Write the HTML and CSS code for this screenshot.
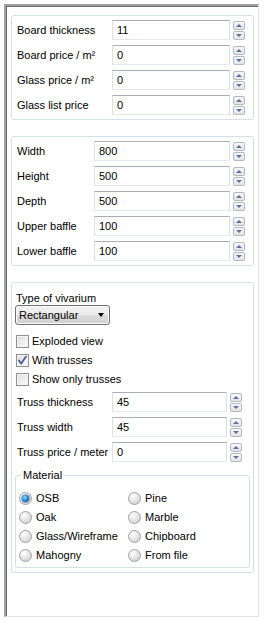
FILE: index.html
```html
<!DOCTYPE html>
<html>
<head>
<meta charset="utf-8">
<link rel="stylesheet" href="styles.css">
</head>
<body>
<div class="frame">
  <section class="group g1">
    <div class="row"><span class="lbl">Board thickness</span><div class="field">11</div><div class="btns"><span class="up"></span><span class="dn"></span></div></div>
    <div class="row"><span class="lbl">Board price / m²</span><div class="field">0</div><div class="btns"><span class="up"></span><span class="dn"></span></div></div>
    <div class="row"><span class="lbl">Glass price / m²</span><div class="field">0</div><div class="btns"><span class="up"></span><span class="dn"></span></div></div>
    <div class="row"><span class="lbl">Glass list price</span><div class="field">0</div><div class="btns"><span class="up"></span><span class="dn"></span></div></div>
  </section>

  <section class="group g2">
    <div class="row"><span class="lbl">Width</span><div class="field">800</div><div class="btns"><span class="up"></span><span class="dn"></span></div></div>
    <div class="row"><span class="lbl">Height</span><div class="field">500</div><div class="btns"><span class="up"></span><span class="dn"></span></div></div>
    <div class="row"><span class="lbl">Depth</span><div class="field">500</div><div class="btns"><span class="up"></span><span class="dn"></span></div></div>
    <div class="row"><span class="lbl">Upper baffle</span><div class="field">100</div><div class="btns"><span class="up"></span><span class="dn"></span></div></div>
    <div class="row"><span class="lbl">Lower baffle</span><div class="field">100</div><div class="btns"><span class="up"></span><span class="dn"></span></div></div>
  </section>

  <section class="group g3">
    <div class="caption">Type of vivarium</div>
    <div class="combo"><span>Rectangular</span><span class="arrow"></span></div>
    <div class="checks">
      <div class="check"><span class="box"></span><span>Exploded view</span></div>
      <div class="check"><span class="box"><svg width="11" height="11" viewBox="0 0 11 11"><path d="M2 5.5 L4.3 8.6 L9 1.6" fill="none" stroke="#4a5f97" stroke-width="1.8" stroke-linejoin="round" stroke-linecap="round"/></svg></span><span>With trusses</span></div>
      <div class="check"><span class="box"></span><span>Show only trusses</span></div>
    </div>
    <div class="truss">
      <div class="row"><span class="lbl">Truss thickness</span><div class="field">45</div><div class="btns"><span class="up"></span><span class="dn"></span></div></div>
      <div class="row"><span class="lbl">Truss width</span><div class="field">45</div><div class="btns"><span class="up"></span><span class="dn"></span></div></div>
      <div class="row"><span class="lbl">Truss price / meter</span><div class="field">0</div><div class="btns"><span class="up"></span><span class="dn"></span></div></div>
    </div>
    <fieldset class="material">
      <legend>Material</legend>
      <div class="radios">
        <div class="radio on"><span class="dot"></span><span>OSB</span></div>
        <div class="radio"><span class="dot"></span><span>Pine</span></div>
        <div class="radio"><span class="dot"></span><span>Oak</span></div>
        <div class="radio"><span class="dot"></span><span>Marble</span></div>
        <div class="radio"><span class="dot"></span><span>Glass/Wireframe</span></div>
        <div class="radio"><span class="dot"></span><span>Chipboard</span></div>
        <div class="radio"><span class="dot"></span><span>Mahogny</span></div>
        <div class="radio"><span class="dot"></span><span>From file</span></div>
      </div>
    </fieldset>
  </section>
</div>
</body>
</html>
```

FILE: styles.css
```css
* { box-sizing: border-box; }

body {
  margin: 0;
  background: #ffffff;
  font-family: "Liberation Sans", Arial, sans-serif;
  font-size: 11px;
  line-height: 13px;
  color: #000;
}

.frame {
  margin: 4px 0 0 4px;
  width: 255px;
  height: 613px;
  border-left: 2px solid #a0a0a0;
  border-top: 2px solid #a0a0a0;
  border-right: 1px solid #e3e3e3;
  border-bottom: 1px solid #e3e3e3;
  box-shadow: inset 1px 1px 0 #696969;
  padding: 9px 4px 0 5px;
  background: #fff;
}

.group {
  border: 1px solid #d5dfe5;
  border-radius: 3px;
  margin-bottom: 16px;
}

.g1, .g2 {
  padding: 4px 8px 4px 5px;
  display: flex;
  flex-direction: column;
  gap: 5px;
}

.row {
  display: flex;
  align-items: center;
  height: 20px;
}

.lbl {
  width: 95px;
  flex: none;
  white-space: nowrap;
}

.g2 .lbl { width: 77px; }

.field {
  flex: 1;
  height: 20px;
  border: 1px solid #abadb3;
  border-left-color: #dbdfe6;
  border-right-color: #dbdfe6;
  border-bottom-color: #e3e9ef;
  padding: 3px 0 0 4px;
  background: #fff;
}

.btns {
  flex: none;
  width: 12px;
  margin-left: 3px;
  display: flex;
  flex-direction: column;
  gap: 1px;
  padding-top: 1px;
}

.up, .dn {
  display: flex;
  align-items: center;
  justify-content: center;
  height: 9px;
  border: 1px solid #b4b8c0;
  border-radius: 2px;
  background: linear-gradient(#f7f7f7, #e2e4e8);
}

.up::after {
  content: "";
  border-left: 3px solid transparent;
  border-right: 3px solid transparent;
  border-bottom: 3px solid #5b71a3;
}

.dn::after {
  content: "";
  border-left: 3px solid transparent;
  border-right: 3px solid transparent;
  border-top: 3px solid #5b71a3;
}

.g3 {
  padding: 9px 3px 4px 3px;
  margin-bottom: 0;
}

.caption {
  margin-left: 1px;
  height: 13px;
}

.combo {
  width: 95px;
  height: 20px;
  border: 1px solid #707070;
  border-radius: 3px;
  background: linear-gradient(#f2f2f2 0, #ebebeb 50%, #dddddd 50%, #cfcfcf 100%);
  display: flex;
  align-items: center;
  justify-content: space-between;
  padding: 0 5px 0 3px;
  box-shadow: inset 0 0 0 1px #fcfcfc;
}

.arrow {
  border-left: 3.5px solid transparent;
  border-right: 3.5px solid transparent;
  border-top: 4px solid #000;
}

.checks {
  margin-top: 7px;
  margin-left: 1px;
}

.check {
  display: flex;
  align-items: center;
  height: 19px;
  gap: 3px;
}

.box {
  width: 13px;
  height: 13px;
  border: 1px solid #8e8f8f;
  background: linear-gradient(135deg, #dcdcdc, #fdfdfd);
  box-shadow: inset 0 0 0 1px #f4f4f4;
  display: flex;
  align-items: center;
  justify-content: center;
}

.truss {
  margin-top: 3px;
  padding: 0 8px 0 2px;
  display: flex;
  flex-direction: column;
  gap: 5px;
}

.material {
  margin: 7px 0 0 0;
  padding: 7px 0 2px 0;
  border: 1px solid #d5dfe5;
  border-radius: 3px;
  min-width: 0;
}

.material legend {
  margin-left: 5px;
  padding: 0 2px;
  line-height: 13px;
}

.radios {
  display: grid;
  grid-template-columns: 109px 1fr;
  margin-left: 3px;
}

.radio {
  display: flex;
  align-items: center;
  height: 19px;
  gap: 4px;
}

.dot {
  width: 13px;
  height: 13px;
  border-radius: 50%;
  border: 1px solid #a2a2a2;
  background: radial-gradient(circle at 35% 30%, #ffffff 0, #e6e6e6 45%, #c8c8c8 100%);
  display: flex;
  align-items: center;
  justify-content: center;
}

.radio.on .dot::after {
  content: "";
  width: 7px;
  height: 7px;
  border-radius: 50%;
  background: radial-gradient(circle at 40% 35%, #9fe0ff 0, #2a8ad4 45%, #124f8c 100%);
  box-shadow: 0 0 0 0.5px #1b5f9a;
}
```
